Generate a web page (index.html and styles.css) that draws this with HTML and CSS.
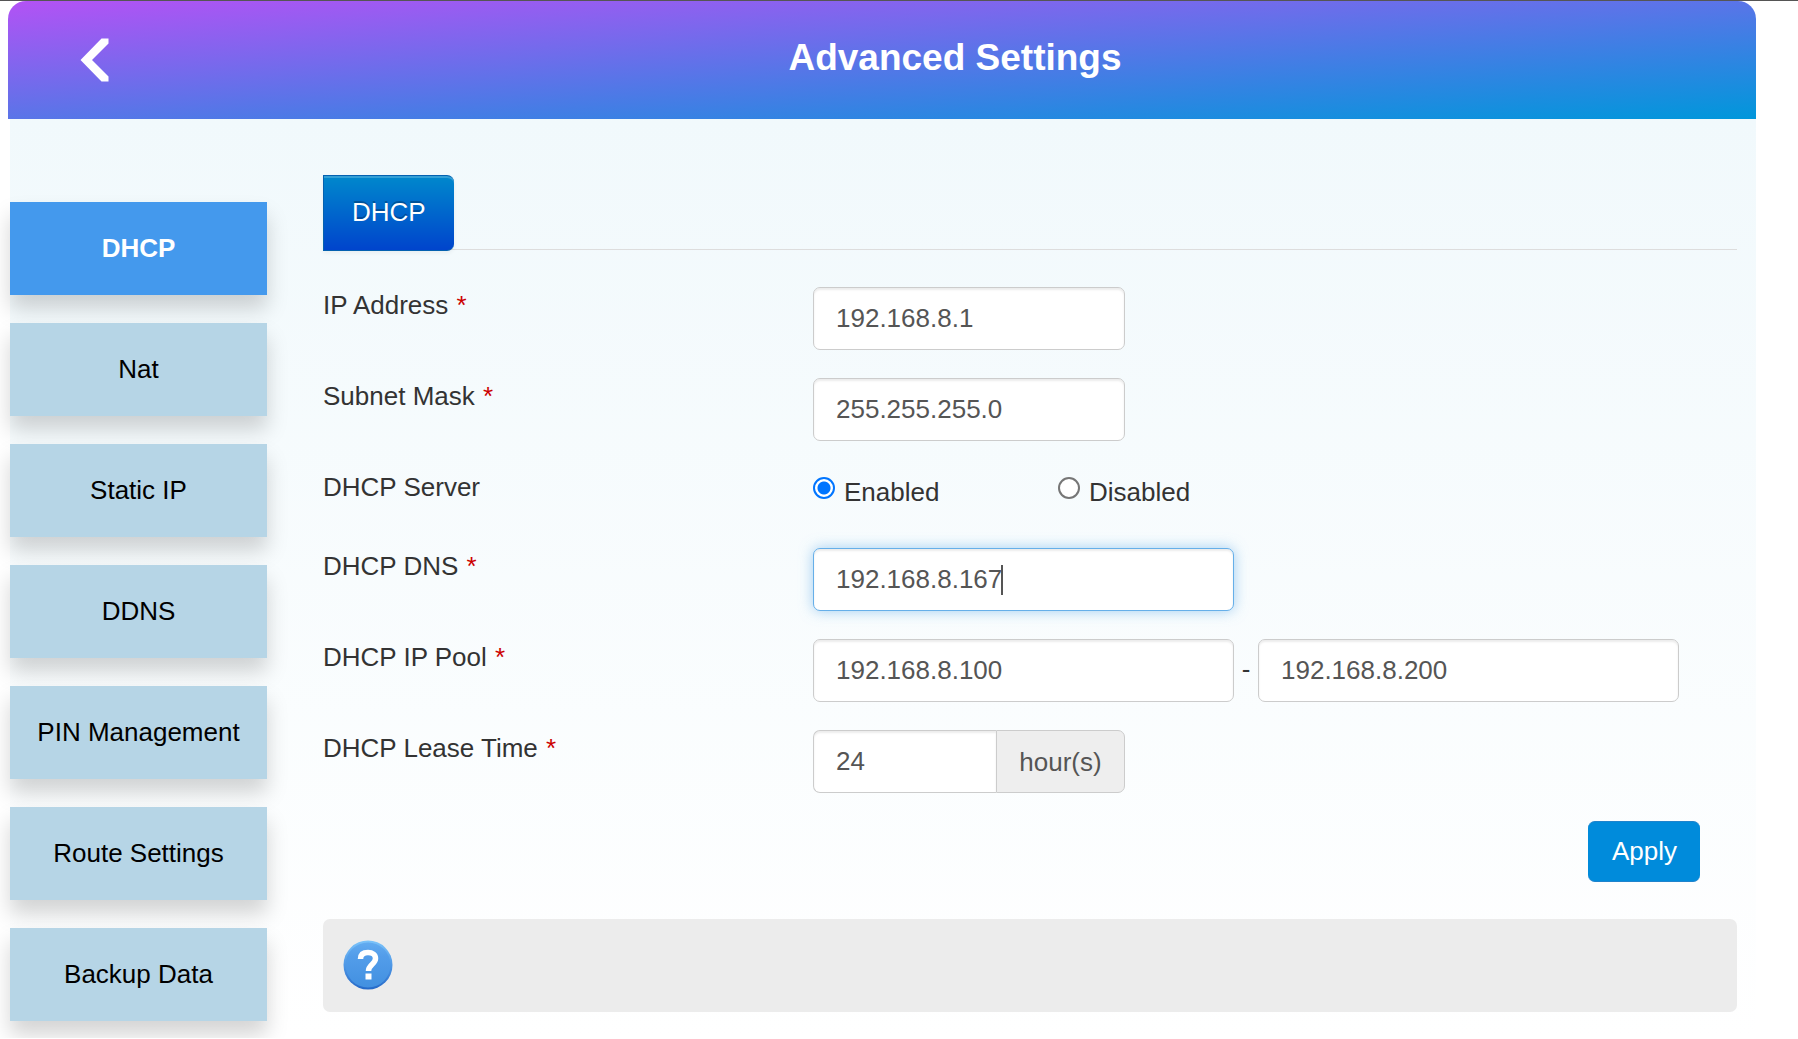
FILE: index.html
```html
<!DOCTYPE html>
<html lang="en">
<head>
<meta charset="utf-8">
<meta name="viewport" content="width=device-width, initial-scale=1">
<title>Advanced Settings</title>
<link rel="stylesheet" href="styles.css">
</head>
<body>
<div class="page">
  <header class="header">
    <a class="back" href="#" aria-label="Back">
      <svg width="30" height="44" viewBox="0 0 30 44" aria-hidden="true"><path d="M21.500 0.500h7v5L12 22 28.500 38.500v5h-7L0.500 22z" fill="#fff"/></svg>
    </a>
    <h1 class="title">Advanced Settings</h1>
  </header>
  <div class="body">
    <nav class="menu">
      <a class="menu-item active" href="#">DHCP</a>
      <a class="menu-item" href="#">Nat</a>
      <a class="menu-item" href="#">Static IP</a>
      <a class="menu-item" href="#">DDNS</a>
      <a class="menu-item" href="#">PIN Management</a>
      <a class="menu-item" href="#">Route Settings</a>
      <a class="menu-item" href="#">Backup Data</a>
    </nav>
    <main class="content">
      <div class="tabs"><button class="tab" type="button">DHCP</button></div>
      <form class="form">
        <div class="row">
          <label class="label" for="ip">IP Address <span class="req">*</span></label>
          <div class="field"><input class="input short" id="ip" type="text" value="192.168.8.1"></div>
        </div>
        <div class="row">
          <label class="label" for="mask">Subnet Mask <span class="req">*</span></label>
          <div class="field"><input class="input short" id="mask" type="text" value="255.255.255.0"></div>
        </div>
        <div class="row server" role="radiogroup" aria-labelledby="server">
          <span class="label" id="server">DHCP Server</span>
          <div class="field">
            <label class="choice"><input class="radio" type="radio" name="server" checked><span>Enabled</span></label>
            <label class="choice"><input class="radio" type="radio" name="server"><span>Disabled</span></label>
          </div>
        </div>
        <div class="row">
          <label class="label" for="dns">DHCP DNS <span class="req">*</span></label>
          <div class="field editing"><input class="input long" id="dns" type="text" value="192.168.8.167" autofocus><span class="caret"></span></div>
        </div>
        <div class="row">
          <label class="label" for="pool">DHCP IP Pool <span class="req">*</span></label>
          <div class="field">
            <input class="input long" id="pool" type="text" value="192.168.8.100">
            <span class="dash">-</span>
            <input class="input long" type="text" value="192.168.8.200" aria-label="DHCP IP Pool end">
          </div>
        </div>
        <div class="row">
          <label class="label" for="lease">DHCP Lease Time <span class="req">*</span></label>
          <div class="field short group">
            <input class="input lease" id="lease" type="text" value="24">
            <span class="addon">hour(s)</span>
          </div>
        </div>
        <div class="actions"><button class="apply" type="button">Apply</button></div>
      </form>
      <div class="help">
        <svg width="50" height="50" viewBox="0 0 50 50" role="img" aria-label="Help">
          <defs>
            <linearGradient id="rim" x1="0" y1="0" x2="0" y2="1"><stop offset="0" stop-color="#7cc4fa"/><stop offset=".5" stop-color="#4f98e6"/><stop offset="1" stop-color="#2569c8"/></linearGradient>
            <linearGradient id="disc" x1="0" y1="0" x2="0" y2="1"><stop offset="0" stop-color="#62abf0"/><stop offset=".3" stop-color="#539dea"/><stop offset="1" stop-color="#4290e0"/></linearGradient>
          </defs>
          <circle cx="25" cy="25" r="24.500" fill="url(#rim)"/>
          <circle cx="25" cy="25" r="22.500" fill="url(#disc)"/>
          <path d="M17.500 19C17.500 14.500 20.500 12.500 25 12.500C29.500 12.500 32.500 14.800 32.500 18.500C32.500 24 25.500 24.500 25.500 31" fill="none" stroke="#fff" stroke-width="5.500"/>
          <path d="M22.500 33.500h6v6h-6z" fill="#fff"/>
        </svg>
      </div>
    </main>
  </div>
</div>
</body>
</html>
```
FILE: styles.css
```css
* { box-sizing: border-box; }

body {
  margin: 0;
  background: #fff;
  border-top: 1px solid #555;
  color: #333;
  font: 26px/36px "Liberation Sans", Arial, sans-serif;
}

input, button { font: inherit; }
a { color: inherit; text-decoration: none; }

.page { margin: 0 42px 0 8px; }

.header {
  display: grid;
  grid-template-columns: 146px 1fr;
  height: 118px;
  border-radius: 18px 18px 0 0;
  background: linear-gradient(to bottom right, #b352f5, #0097db);
  color: #fff;
}
.back { padding: 37px 0 0 72px; line-height: 0; }
.title {
  margin: 0;
  padding: 35px 0 0;
  font-size: 37px;
  line-height: 44px;
  text-align: center;
}

.body {
  display: flex;
  gap: 56px;
  margin-left: 2px;
  padding: 56px 19px 0 0;
  background: linear-gradient(#f1f9fc, #fff);
}

.menu {
  display: flex;
  flex: 0 0 257px;
  flex-direction: column;
  gap: 28px;
  padding: 27px 0 17px;
}
.menu-item {
  padding: 28px 0 29px;
  background: #b6d5e6;
  box-shadow: 0 14px 20px rgba(0, 0, 0, .17);
  color: #000;
  text-align: center;
}
.menu-item.active {
  background: #4499ed;
  color: #fff;
  font-weight: bold;
}

.content { flex: 1; min-width: 0; }

.tabs {
  height: 75px;
  border-bottom: 1px solid #ddd;
}
.tab {
  height: 76px;
  padding: 0 28px 2px;
  border: 1px solid #0461b0;
  border-width: 1px 0 1px 1px;
  border-radius: 0 7px 7px 0;
  background: linear-gradient(#08c, #04c);
  box-shadow: inset 0 2px 0 rgba(255, 255, 255, .2), 0 2px 4px rgba(0, 0, 0, .05);
  color: #fff;
  text-shadow: 0 -2px 0 rgba(0, 0, 0, .25);
}

.form { padding-top: 37px; }
.row {
  display: grid;
  grid-template-columns: minmax(0, 490px) 1fr;
  height: 91px;
}
.row.server { height: 79px; }
.req { margin-left: 1px; color: #c00; }
.field { display: flex; align-items: flex-start; }

.input {
  height: 63px;
  padding: 0 22px;
  border: 1px solid #ccc;
  border-radius: 7px;
  background: #fff;
  box-shadow: inset 0 2px 2px rgba(0, 0, 0, .075);
  color: #555;
}
.input:focus {
  border-color: #66afe9;
  outline: 0;
  box-shadow: inset 0 2px 2px rgba(0, 0, 0, .075), 0 0 14px rgba(102, 175, 233, .6);
}
.short { width: 312px; }
.long { width: 421px; }
.dash { width: 24px; padding-top: 12px; text-align: center; }

/* Static text cursor at the end of the focused value */
.editing { position: relative; }
.editing .input { caret-color: transparent; }
.caret {
  position: absolute;
  top: 17px;
  left: 188px;
  width: 2px;
  height: 30px;
  background: #555;
}

.lease { width: 183px; border-radius: 7px 0 0 7px; }
.addon {
  flex: 1;
  height: 63px;
  padding: 13px 0 0;
  border: 1px solid #ccc;
  border-radius: 0 7px 7px 0;
  background: #eee;
  color: #555;
  text-align: center;
}
.group .input { border-right: 0; }

.choice { display: flex; gap: 9px; width: 245px; padding-top: 5px; }
.radio {
  appearance: none;
  width: 22px;
  height: 22px;
  margin: 3px 0 0;
  border: 2px solid #767676;
  border-radius: 50%;
  background: #fff;
}
.radio:checked {
  border-color: #0075ff;
  background: radial-gradient(circle, #0075ff 6px, #fff 7px);
}

.actions { display: flex; justify-content: flex-end; padding-right: 37px; }
.apply {
  height: 61px;
  padding: 0 23px 2px 24px;
  border: 1px solid #1f83cc;
  border-width: 1px 0;
  border-radius: 7px;
  background: #008bdb;
  color: #fff;
}

.help {
  margin-top: 37px;
  height: 93px;
  padding: 21px 20px;
  border-radius: 7px;
  background: #ececec;
  line-height: 0;
}
```
